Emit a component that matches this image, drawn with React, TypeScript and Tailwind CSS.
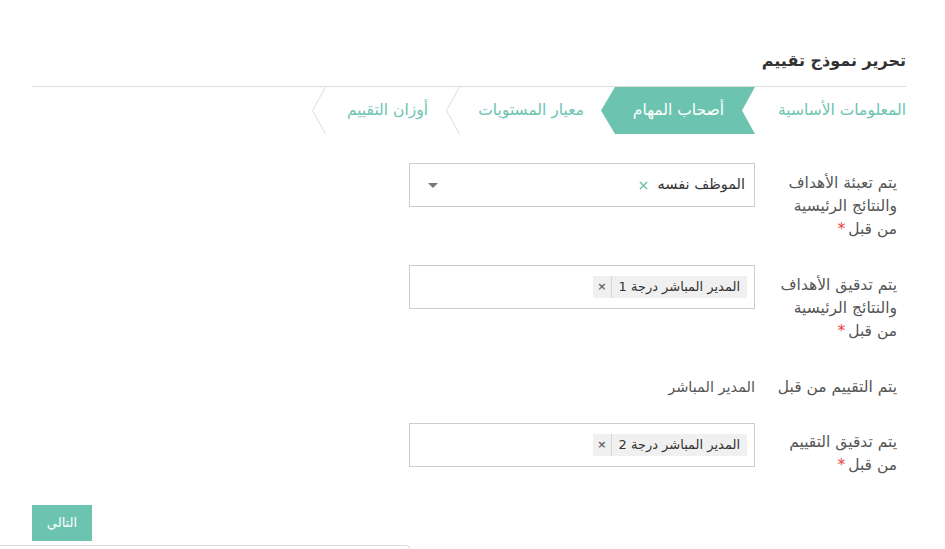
import { X } from 'lucide-react';

const font = { fontFamily: '"DejaVu Sans", "Noto Sans", sans-serif' };

const Chevron = ({ className }: { className?: string }) => (
  <svg className={className} width="14" height="47" viewBox="0 0 14 47" fill="none">
    <path d="M13.5 0 L0.5 23.5 L13.5 47" stroke="#dcdcdc" strokeWidth="1" />
  </svg>
);

const Tabs = () => (
  <div className="flex h-[47px] items-stretch text-[15.5px] text-[#6cc4b0]">
    <div className="flex w-[151px] items-center">المعلومات الأساسية</div>
    <div className="relative flex w-[154px] items-center pr-[31px] text-white">
      <svg className="absolute inset-0" width="154" height="47" viewBox="0 0 154 47">
        <polygon points="154,0 141,23.5 154,47 14,47 0,23.5 14,0" fill="#6cc4b0" />
      </svg>
      <span className="relative">أصحاب المهام</span>
    </div>
    <div className="relative flex w-[155px] items-center pr-[17px]">
      <Chevron className="absolute left-0 top-0" />
      معيار المستويات
    </div>
    <div className="relative flex w-[134px] items-center pr-[18px]">
      <Chevron className="absolute left-0 top-0" />
      أوزان التقييم
    </div>
  </div>
);

const Label = ({ lines, required }: { lines: string[]; required?: boolean }) => (
  <div className="w-[151px] pr-[9px] text-[15.5px] leading-[23px] text-[#555]">
    {lines.map((l, i) => (
      <div key={i}>
        {l}
        {required && i === lines.length - 1 && <span className="mr-[3px] text-[#e8443a]">*</span>}
      </div>
    ))}
  </div>
);

const Tag = ({ text }: { text: string }) => (
  <div className="flex h-[22px] items-center bg-[#f0f0f0] text-[13px] text-[#333]">
    <span className="px-[7px]">{text}</span>
    <span className="flex h-full items-center border-r border-[#d5d5d5] px-[4px] text-[11px] font-bold text-[#666]">×</span>
  </div>
);

export default function App() {
  return (
    <div dir="rtl" className="h-[549px] w-[945px] overflow-hidden bg-white" style={font}>
      <div className="ml-[32px] mr-[39px] pt-[48px]">
        <h1 className="pb-[12px] text-[16px] font-bold leading-[26px] text-[#333]">تحرير نموذج تقييم</h1>
        <div className="border-t border-[#dddddd]" />
        <Tabs />

        <div className="mt-[29px] flex items-start">
          <div className="pt-[9px]">
            <Label lines={['يتم تعبئة الأهداف', 'والنتائج الرئيسية', 'من قبل']} required />
          </div>
          <div className="flex h-[44px] w-[346px] items-center border border-[#cccccc] pl-[18px] pr-[9px]">
            <span className="text-[14.5px] text-[#333]">الموظف نفسه</span>
            <X className="mr-[7px] h-[13px] w-[13px] text-[#6cc4b0]" strokeWidth={2.5} />
            <span className="mr-auto h-0 w-0 border-x-[5px] border-t-[5px] border-x-transparent border-t-[#777]" />
          </div>
        </div>

        <div className="mt-[24px] flex items-start">
          <div className="pt-[9px]">
            <Label lines={['يتم تدقيق الأهداف', 'والنتائج الرئيسية', 'من قبل']} required />
          </div>
          <div className="flex h-[44px] w-[346px] items-start border border-[#cccccc] pr-[7px] pt-[10px]">
            <Tag text="المدير المباشر درجة 1" />
          </div>
        </div>

        <div className="mt-[33px] flex items-center">
          <Label lines={['يتم التقييم من قبل']} />
          <div className="text-[14.5px] text-[#555]">المدير المباشر</div>
        </div>

        <div className="mt-[24px] flex items-start">
          <div className="pt-[8px]">
            <Label lines={['يتم تدقيق التقييم', 'من قبل']} required />
          </div>
          <div className="flex h-[44px] w-[346px] items-start border border-[#cccccc] pr-[7px] pt-[10px]">
            <Tag text="المدير المباشر درجة 2" />
          </div>
        </div>

        <div className="mt-[28px] flex justify-end">
          <button className="h-[36px] w-[60px] bg-[#6cc4b0] text-[13px] text-white">التالي</button>
        </div>
      </div>
      <div dir="ltr" className="mt-[4px]">
        <div className="h-[10px] w-[410px] rounded-tr-[4px] border-r border-t border-[#dddddd]" />
      </div>
    </div>
  );
}
